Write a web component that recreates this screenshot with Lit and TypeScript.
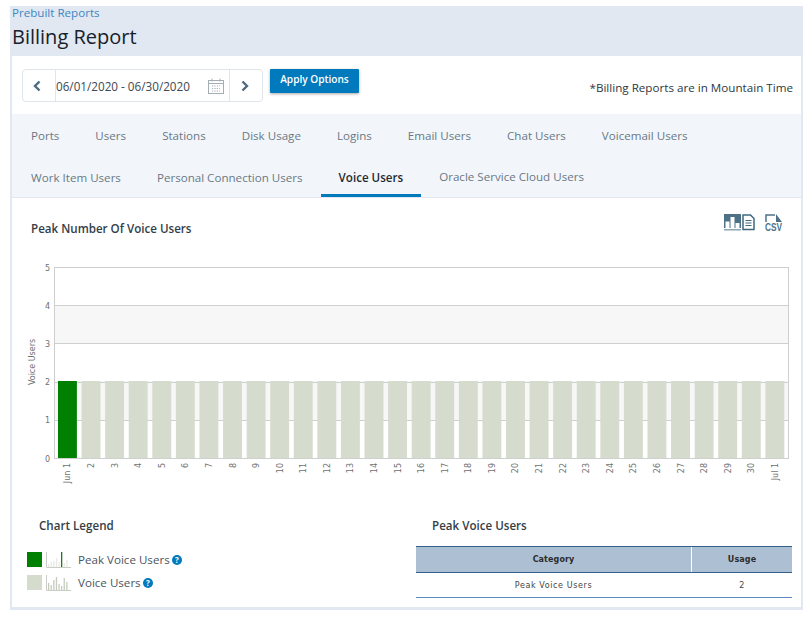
import { LitElement, html, svg, css } from "lit";
import { customElement } from "lit/decorators.js";

const BAR_X0 = 58;
const BAR_PITCH = 23.58;
const BAR_W = 18.9;
const Y0 = 458;
const UNIT = 38.2;

const dayLabels = ["Jun 1", ...Array.from({ length: 29 }, (_, i) => String(i + 2)), "Jul 1"];
const ROW1 = ["Ports", "Users", "Stations", "Disk Usage", "Logins", "Email Users", "Chat Users", "Voicemail Users"];
const ROW2 = ["Work Item Users", "Personal Connection Users", "Voice Users", "Oracle Service Cloud Users"];

const help = html`<svg class="help" viewBox="0 0 10 10" width="10" height="10">
  <circle cx="5" cy="5" r="5" fill="#0079bd"></circle>
  <text x="5" y="8" text-anchor="middle" class="help-q">?</text>
</svg>`;

function spark(heights: number[], peak: number) {
  return html`<svg class="spark" viewBox="0 0 25 16" width="25" height="16">
    <path d="M.5 0V15.5H25" fill="none" stroke="#c9cdc6" stroke-width="1"></path>
    ${heights.map((h, i) => svg`<rect x=${2 + i * 2.6} y=${15 - h} width="1.3" height=${h}
      fill=${i === peak ? "#1f7a1f" : peak >= 0 ? "#e8ebe3" : "#c6ccbd"}></rect>`)}
  </svg>`;
}

@customElement("app-root")
export class AppRoot extends LitElement {
  static styles = css`
    :host { display: block; width: 811px; height: 617px; background: #fff; font-family: "Open Sans", sans-serif; overflow: hidden; }
    .panel { margin: 6px 0 0 10px; width: 793px; height: 604px; box-sizing: border-box; border: solid #e1e8f1; border-width: 0 2px 3px 2px; display: flex; flex-direction: column; }
    .head { background: #e1e8f1; margin: 0 -2px; padding: 0 2px; height: 50px; box-sizing: border-box; flex: none; }
    .crumb { font-size: 11.6px; line-height: 13px; color: #3f86c4; }
    h1 { margin: 4px 0 0; font-size: 20px; line-height: 28px; font-weight: 400; color: #17212b; }
    .toolbar { height: 58px; flex: none; display: flex; align-items: flex-start; padding: 13px 8px 0 10px; box-sizing: border-box; }
    .dates { width: 241px; height: 33px; box-sizing: border-box; border: 1px solid #dfe5ea; border-radius: 4px; display: flex; align-items: center; }
    .nav { width: 32px; height: 100%; display: flex; align-items: center; justify-content: center; flex: none; padding-right: 4px; box-sizing: border-box; }
    .nav.next { padding: 0 2px 0 0; }
    .range { flex: 1; height: 100%; border: solid #dfe5ea; border-width: 0 1px; display: flex; align-items: center; justify-content: space-between; padding: 0 5px 0 0; font-size: 11.7px; color: #3c4852; }
    .apply { margin-left: 7px; width: 89px; height: 24px; border: 0; border-radius: 1px; padding: 0 0 5px; background: #0079bd; color: #fff; font: 600 10.1px "Open Sans", sans-serif; box-shadow: 0 1px 3px rgba(0,0,0,.35); }
    .note { margin: 11px 0 0 auto; font-size: 11.65px; line-height: 16px; color: #2d3740; }
    .tabs { flex: none; height: 84px; box-sizing: border-box; background: #f2f6fa; border-bottom: 1px solid #e1e8f1; padding-left: 1px; }
    .row { display: flex; height: 41.5px; }
    .tab { padding: 2px 18px 0; display: flex; align-items: center; font-size: 11.6px; color: #6a7885; box-sizing: border-box; white-space: nowrap; }
    .tab.active { font-weight: 600; color: #1f2a33; border-bottom: 3px solid #0079bd; padding-top: 5px; }
    .tab.lift { padding: 1px 18px 1px; }
    .chart-head { flex: none; height: 52px; display: flex; justify-content: space-between; padding: 16px 19px 0 19px; box-sizing: border-box; }
    h2 { margin: 0; font-size: 11.6px; line-height: 30px; font-weight: 600; color: #333d47; }
    .tools { display: flex; height: 18px; gap: 1px; }
    .tools .csv { margin-left: 9px; overflow: visible; }
    .chart { display: block; flex: none; }
    .axis { font: 8px "DejaVu Sans", sans-serif; fill: #707070; }
    .bottom { flex: 1; display: flex; }
    .legend { width: 404px; flex: none; padding: 17px 0 0 15px; box-sizing: border-box; }
    .legend h2, .summary h2 { line-height: 18px; }
    .legend h2 { padding-left: 12px; }
    .items { margin-top: 17px; display: flex; flex-direction: column; gap: 8px; }
    .item { display: flex; align-items: center; height: 15px; font-size: 11.6px; color: #4a5661; }
    .swatch { width: 15px; height: 15px; margin-right: 4px; }
    .swatch.peak { background: #008000; }
    .swatch.voice { background: #d5dbcd; }
    .spark { margin-right: 7px; }
    .help { margin-left: 2.5px; }
    .help-q { font: 700 8px "Open Sans", sans-serif; fill: #fff; }
    .summary { width: 376px; flex: none; padding-top: 17px; }
    .summary h2 { padding-left: 16px; }
    table { margin-top: 11px; width: 100%; border-collapse: collapse; font: 8px "DejaVu Sans", sans-serif; color: #444; table-layout: fixed; }
    th { height: 25px; padding: 0; background: #adc0d3; border-top: 1px solid #33608f; border-bottom: 1px solid #33608f; font-weight: 700; color: #2c2c2c; letter-spacing: .1px; }
    td { height: 24px; padding: 0; text-align: center; border-bottom: 1px solid #5d8ac0; letter-spacing: .6px; }
    .sep { border-left: 1px solid #fff; }
    .c1 { width: 275px; }
  `;

  render() {
    return html`<div class="panel">
      <header class="head">
        <div class="crumb">Prebuilt Reports</div>
        <h1>Billing Report</h1>
      </header>
      <div class="toolbar">
        <div class="dates">
          <div class="nav"><svg width="10" height="12" viewBox="0 0 10 12"><path d="M7.5 1.5 3 6l4.5 4.5" fill="none" stroke="#4d6b80" stroke-width="2.4"></path></svg></div>
          <div class="range">
            <span>06/01/2020 - 06/30/2020</span>
            <svg width="16" height="16" viewBox="0 0 16 16" fill="none" stroke="#a3aeb5">
              <rect x=".5" y="2.5" width="15" height="13"></rect>
              <path d="M.5 5.5h15M4 .5v3M12 .5v3"></path>
              <path d="M4 8h8M4 10.5h8M4 13h8" stroke-dasharray="1.2 1.2"></path>
            </svg>
          </div>
          <div class="nav next"><svg width="10" height="12" viewBox="0 0 10 12"><path d="M2.5 1.5 7 6l-4.5 4.5" fill="none" stroke="#4d6b80" stroke-width="2.4"></path></svg></div>
        </div>
        <button class="apply">Apply Options</button>
        <div class="note">*Billing Reports are in Mountain Time</div>
      </div>
      <nav class="tabs">
        <div class="row">${ROW1.map((t) => html`<div class="tab">${t}</div>`)}</div>
        <div class="row">${ROW2.map((t) => html`<div class="tab ${t === "Voice Users" ? "active" : ""} ${t.startsWith("Oracle") ? "lift" : ""}">${t}</div>`)}</div>
      </nav>
      <div class="chart-head">
        <h2>Peak Number Of Voice Users</h2>
        <div class="tools">
          <svg width="17" height="17" viewBox="0 0 17 17">
            <rect width="17" height="14" fill="#4d7287"></rect>
            <path d="M1.500 14V7.500h4V14zM6.500 14V3h4v11zM11.500 14V9h4v5z" fill="#fff"></path>
            <rect y="15" width="17" height="1.500" fill="#8ea6b4"></rect>
          </svg>
          <svg width="13" height="17" viewBox="0 0 13 17" fill="none" stroke="#3f687e">
            <path d="M1 1h7.500L12 4.500V15.500H1z" stroke-width="1.500"></path>
            <path d="M3.500 6.500h6M3.500 9h6M3.500 11.500h6" stroke-width="1.200"></path>
          </svg>
          <svg class="csv" width="17" height="18" viewBox="0 0 17 18">
            <path d="M1 8V1h9" fill="none" stroke="#4d7287" stroke-width="1.500"></path>
            <path d="M11 0l6 8h-6z" fill="#4d7287"></path>
            <text x="8.5" y="17" text-anchor="middle" textLength="17" lengthAdjust="spacingAndGlyphs" font-family="Liberation Sans" font-weight="700" font-size="11" fill="#4d7287">CSV</text>
          </svg>
        </div>
      </div>
      <svg class="chart" width="789" height="250" viewBox="12 250 789 250">
        <rect x="54" y="305" width="735" height="38" fill="#f7f7f7"></rect>
        <rect x="54" y="381" width="735" height="39" fill="#f7f7f7"></rect>
        ${[0, 1, 2, 3, 4, 5].map((v) => svg`
          <line x1="54" x2="789" y1=${Math.round(Y0 - v * UNIT) + 0.5} y2=${Math.round(Y0 - v * UNIT) + 0.5} stroke="#cfcfcf"></line>
          <text class="axis" x="50" y=${Y0 - v * UNIT + 3.5} text-anchor="end">${v}</text>`)}
        <line x1="54.5" x2="54.5" y1="267" y2="458" stroke="#cfcfcf"></line>
        <line x1="788.5" x2="788.5" y1="267" y2="458" stroke="#cfcfcf"></line>
        ${dayLabels.map((d, i) => {
          const x = BAR_X0 + i * BAR_PITCH;
          return svg`
            <rect x=${x} y="381" width=${BAR_W} height="77" fill=${i === 0 ? "#008000" : "#d5dbcd"}></rect>
            <text class="axis" text-anchor="end" transform="translate(${x + BAR_W / 2 + 3} 463) rotate(-90)">${d}</text>`;
        })}
        <text class="axis" text-anchor="middle" transform="translate(35 362) rotate(-90)">Voice Users</text>
      </svg>
      <div class="bottom">
        <section class="legend">
          <h2>Chart Legend</h2>
          <div class="items">
            <div class="item"><span class="swatch peak"></span>${spark([3, 5, 6, 9, 5, 15, 4, 7], 5)}Peak Voice Users${help}</div>
            <div class="item"><span class="swatch voice"></span>${spark([7, 5, 10, 13, 6, 4, 12, 8], -1)}Voice Users${help}</div>
          </div>
        </section>
        <section class="summary">
          <h2>Peak Voice Users</h2>
          <table>
            <thead><tr><th class="c1">Category</th><th class="sep">Usage</th></tr></thead>
            <tbody><tr><td>Peak Voice Users</td><td class="sep">2</td></tr></tbody>
          </table>
        </section>
      </div>
    </div>`;
  }
}
